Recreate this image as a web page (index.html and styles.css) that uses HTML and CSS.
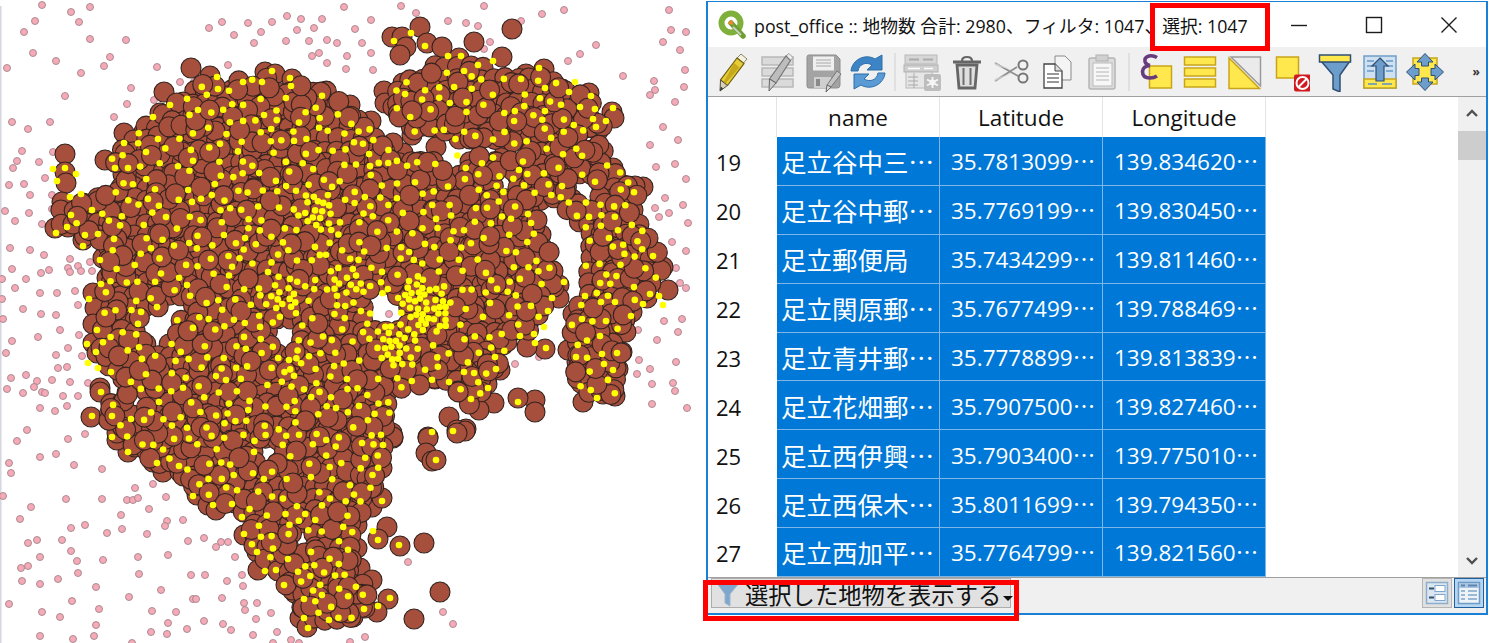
FILE: index.html
```html
<!DOCTYPE html>
<html lang="ja">
<head>
<meta charset="utf-8">
<title>post_office</title>
<link rel="stylesheet" href="styles.css">
</head>
<body>
<div class="page">
  <section class="map"><svg id="map" class="map-canvas" width="706" height="643" viewBox="0 0 706 643"></svg></section>
  <section class="window">
    <header class="titlebar">
      <svg class="logo" width="30" height="30" viewBox="0 0 30 30"><circle cx="14" cy="13" r="9.5" fill="#fff" stroke="#7fb03c" stroke-width="6"/><path d="M14 13 L26 26" stroke="#6f9f32" stroke-width="5.5" stroke-linecap="round"/><path d="M16 17 L24 25" stroke="#c9cfc0" stroke-width="2"/><path d="M10.5 13.5 L15 9.5 L16.5 15 Z" fill="#ef8a2e"/></svg>
      <div class="title">post_office :: 地物数 合計: 2980、フィルタ: 1047、選択: 1047</div>
      <div class="wbtn"><svg width="18" height="18" viewBox="0 0 18 18"><path d="M1 9.5H17" class="wline"/></svg></div>
      <div class="wbtn"><svg width="18" height="18" viewBox="0 0 18 18"><rect x="1.5" y="1.5" width="15" height="15" class="wline"/></svg></div>
      <div class="wbtn"><svg width="18" height="18" viewBox="0 0 18 18"><path d="M1.5 1.5L16.5 16.5M16.5 1.5L1.5 16.5" class="wline"/></svg></div>
    </header>
    <nav class="toolbar">
      <div class="tool"><svg width="40" height="40" viewBox="0 0 40 40"><path d="M24 6L28 2L34 7L30.500 11Z" fill="#f5f1df" stroke="#8b8468"/><path d="M24 6L31 11.500L14.500 33.500L7.500 28Z" fill="#e6cd35" stroke="#6d5e12" stroke-width="1.200"/><path d="M21 11L26.500 15.500L12 32L10.500 30.500Z" fill="#c7a91c"/><path d="M7.500 28L14.500 33.500L7 39Z" fill="#d9d0b8" stroke="#55503f"/><path d="M7.800 34.500L10 36.500L7 39Z" fill="#333"/></svg></div>
      <div class="tool"><svg width="40" height="40" viewBox="0 0 40 40"><g class="graybar"><rect x="4" y="5" width="31" height="8"/><rect x="4" y="16" width="31" height="8"/><rect x="4" y="27" width="31" height="8"/></g><path d="M28 4L31 1.500L35 5.500L32 9Z" fill="#eee" stroke="#999"/><path d="M28 4L32.500 8.500L18 31L11.500 27Z" fill="#bdbdbd" stroke="#777" stroke-width="1.200"/><path d="M11.500 27L18 31L11 39Z" fill="#ccc" stroke="#666"/></svg></div>
      <div class="tool"><svg width="40" height="40" viewBox="0 0 40 40"><path d="M4 5Q4 3 6 3H33L37 7V33Q37 36 34 36H6Q4 36 4 34Z" fill="#a3a3a3" stroke="#8d8d8d"/><rect x="10" y="4.500" width="21" height="14" fill="#efefef"/><path d="M13 8H28M13 11H28M13 14H28" stroke="#a8a8a8"/><rect x="11" y="25" width="17" height="11" fill="#cfcfcf"/><rect x="13" y="27" width="4" height="7" fill="#8a8a8a"/><path d="M34 19L38 22L28 35L24 33Z" fill="#c4c4c4" stroke="#777"/><path d="M24 33L28 35L23 40Z" fill="#ddd" stroke="#666"/></svg></div>
      <div class="tool"><svg width="40" height="40" viewBox="0 0 40 40"><path d="M3 19C4 8 17 1 27 7L34 3V18H19L24 13C18 9.500 11 12 10 19Z" fill="#3d84c6" stroke="#2f6ea8"/><path d="M37 21C36 32 23 39 13 33L6 37V22H21L16 27C22 30.500 29 28 30 21Z" fill="#5a9bd5" stroke="#2f6ea8"/></svg></div>
      <i class="sep sep-a"></i>
      <div class="tool"><svg width="40" height="40" viewBox="0 0 40 40"><rect x="3" y="3" width="32" height="9" fill="#d6d6d6" stroke="#b8b8b8"/><path d="M7 7.500H17M21 7.500H31" stroke="#aaa" stroke-width="2"/><rect x="2" y="13" width="34" height="7" fill="#cfcfcf" stroke="#b0b0b0"/><path d="M6 16.500H18M22 16.500H31" stroke="#fff" stroke-width="1.500"/><rect x="4" y="20" width="26" height="16" fill="#e6e6e6" stroke="#b8b8b8"/><path d="M6 25H16M6 29H16M6 33H16M12 21V36" stroke="#aaa"/><rect x="22" y="22" width="17" height="17" rx="2" fill="#bdbdbd"/><path d="M30.500 25V36M25 27.500L36 33.500M36 27.500L25 33.500" stroke="#f5f5f5" stroke-width="1.800"/><circle cx="30.500" cy="30.500" r="3" fill="#f5f5f5"/></svg></div>
      <div class="tool"><svg width="40" height="40" viewBox="0 0 40 40"><path d="M6 10H34" stroke="#666" stroke-width="3"/><path d="M15 9Q15 5 20 5Q25 5 25 9" fill="none" stroke="#666" stroke-width="2.200"/><path d="M10 13H30L28 36H12Z" fill="#dedede" stroke="#666" stroke-width="2.800"/><path d="M16.500 16V33M23.500 16V33" stroke="#6e6e6e" stroke-width="2"/></svg></div>
      <div class="tool"><svg width="40" height="40" viewBox="0 0 40 40"><path d="M3 11L26 24M3 29L25 15" stroke="#8d8d8d" stroke-width="1.800" fill="none"/><path d="M3 11L22 19L3 13Z" fill="#ccc"/><path d="M3 29L22 20L3 27Z" fill="#ccc"/><circle cx="31" cy="13" r="4.500" fill="#f2f2f2" stroke="#777" stroke-width="2"/><circle cx="31" cy="26" r="4.500" fill="#f2f2f2" stroke="#777" stroke-width="2"/></svg></div>
      <div class="tool"><svg width="40" height="40" viewBox="0 0 40 40"><path d="M18 4H28L34 10V28H18Z" fill="#f4f4f4" stroke="#8a8a8a"/><path d="M7 12H18L25 19V36H7Z" fill="#fff" stroke="#444" stroke-width="1.300"/><path d="M18 12V19H25" fill="#ddd" stroke="#444"/><path d="M10 22H22M10 26H22M10 30H22" stroke="#333"/></svg></div>
      <div class="tool"><svg width="40" height="40" viewBox="0 0 40 40"><rect x="7" y="6" width="26" height="31" rx="2" fill="#dcdcdc" stroke="#b5b5b5" stroke-width="1.500"/><rect x="14" y="3" width="12" height="6" fill="#d0d0d0" stroke="#b0b0b0"/><rect x="11" y="11" width="19" height="23" fill="#f7f7f7" stroke="#bbb"/><path d="M14 16H27M14 20H27M14 24H27M14 28H27" stroke="#b5b5b5"/></svg></div>
      <i class="sep sep-b"></i>
      <div class="tool"><svg width="40" height="40" viewBox="0 0 40 40"><rect x="14.500" y="14" width="22" height="22" class="ybox"/><path d="M22 5.500Q18 3 14 4Q9 5.500 10 9.500Q11 13 15 13.500Q8 14 7.500 19.500Q7.500 26 15 26Q19 26 22 24" fill="none" stroke="#673c7d" stroke-width="3.600"/></svg></div>
      <div class="tool"><svg width="40" height="40" viewBox="0 0 40 40"><rect x="4.500" y="5" width="31" height="8" class="ybox"/><rect x="4.500" y="16" width="31" height="8" class="ybox"/><rect x="4.500" y="27" width="31" height="8" class="ybox"/></svg></div>
      <div class="tool"><svg width="40" height="40" viewBox="0 0 40 40"><path d="M6 5H35.500V34Z" fill="#ebebeb" stroke="#9a9a9a" stroke-width="1.500"/><path d="M4 6L34.500 36.500H4Z" fill="#ffe84d" stroke="#c9a41a" stroke-width="1.500"/></svg></div>
      <div class="tool"><svg width="40" height="40" viewBox="0 0 40 40"><rect x="6.500" y="5" width="22" height="21" class="ybox"/><rect x="24" y="22.500" width="17" height="17" rx="2" fill="#d11a1f"/><circle cx="32.500" cy="31" r="6" fill="#d11a1f" stroke="#fff" stroke-width="2"/><path d="M28.500 35L36.500 27" stroke="#fff" stroke-width="2"/></svg></div>
      <div class="tool"><svg width="40" height="40" viewBox="0 0 40 40"><path d="M6 9L18 23V37L25 40V23L35 9Z" fill="#6d9dcb" stroke="#2f4f75" stroke-width="1.500"/><rect x="4.500" y="3" width="31" height="7" fill="#ffe84d" stroke="#2f4f75" stroke-width="1.500"/></svg></div>
      <div class="tool"><svg width="40" height="40" viewBox="0 0 40 40"><rect x="4" y="4" width="32" height="32" fill="#cfe0f0" stroke="#6f9cc7" stroke-width="1.500"/><path d="M7 9H14M26 9H33M7 14H14M26 14H33M7 19H14M26 19H33" stroke="#7eaad4" stroke-width="2"/><rect x="4" y="27" width="32" height="9" fill="#ffe84d" stroke="#c9a41a" stroke-width="1.500"/><path d="M8 32H17M22 32H32" stroke="#5c8fc2" stroke-width="1.500"/><path d="M20 6L28 14H24V29H16V14H12Z" fill="#6d9dcb" stroke="#2f4f75" stroke-width="1.200"/></svg></div>
      <div class="tool"><svg width="40" height="40" viewBox="0 0 40 40"><rect x="8" y="6" width="24" height="26" fill="#ffe84d" stroke="#c9a41a" stroke-width="1.500"/><g fill="#6d9dcb" stroke="#2f4f75"><path d="M20 1.500L28 10H23.500V14H16.500V10H12Z"/><path d="M20 38.500L28 30H23.500V26H16.500V30H12Z"/><path d="M1.500 20L10 12V16.500H14V23.500H10V28Z"/><path d="M38.500 20L30 12V16.500H26V23.500H30V28Z"/></g></svg></div>
      <div class="more">»</div>
    </nav>
    <div class="table-area">
      <div class="grid">
        <div class="head corner"></div><div class="head">name</div><div class="head">Latitude</div><div class="head">Longitude</div>
        <div class="rownum">19</div><div class="cell name">足立谷中三⋯</div><div class="cell">35.7813099⋯</div><div class="cell">139.834620⋯</div>
        <div class="rownum">20</div><div class="cell name">足立谷中郵⋯</div><div class="cell">35.7769199⋯</div><div class="cell">139.830450⋯</div>
        <div class="rownum">21</div><div class="cell name">足立郵便局</div><div class="cell">35.7434299⋯</div><div class="cell">139.811460⋯</div>
        <div class="rownum">22</div><div class="cell name">足立関原郵⋯</div><div class="cell">35.7677499⋯</div><div class="cell">139.788469⋯</div>
        <div class="rownum">23</div><div class="cell name">足立青井郵⋯</div><div class="cell">35.7778899⋯</div><div class="cell">139.813839⋯</div>
        <div class="rownum">24</div><div class="cell name">足立花畑郵⋯</div><div class="cell">35.7907500⋯</div><div class="cell">139.827460⋯</div>
        <div class="rownum">25</div><div class="cell name">足立西伊興⋯</div><div class="cell">35.7903400⋯</div><div class="cell">139.775010⋯</div>
        <div class="rownum">26</div><div class="cell name">足立西保木⋯</div><div class="cell">35.8011699⋯</div><div class="cell">139.794350⋯</div>
        <div class="rownum">27</div><div class="cell name">足立西加平⋯</div><div class="cell">35.7764799⋯</div><div class="cell">139.821560⋯</div>
      </div>
      <div class="spacer"></div>
      <aside class="scrollbar">
        <svg class="chev" width="16" height="12" viewBox="0 0 16 12"><path d="M3 9L8 4L13 9" fill="none" stroke="#505050" stroke-width="2.400"/></svg>
        <div class="thumb"></div>
        <div class="track"></div>
        <svg class="chev" width="16" height="12" viewBox="0 0 16 12"><path d="M3 3L8 8L13 3" fill="none" stroke="#505050" stroke-width="2.400"/></svg>
      </aside>
    </div>
    <footer class="statusbar">
      <div class="filterbtn">
        <svg class="funnel" width="26" height="26" viewBox="0 0 26 26"><path d="M1 1H25L15 13V25L10 22V13Z" fill="#7fa6cc" stroke="#9db6cf"/></svg>
        <span class="filterlabel">選択した地物を表示する</span>
        <i class="caret"></i>
      </div>
      <div class="viewbtns">
        <div class="viewbtn"><svg width="24" height="24" viewBox="0 0 24 24"><rect x="1.500" y="1.500" width="21" height="21" fill="#dbe6f0" stroke="#8eaecb" stroke-width="1.500"/><rect x="10" y="4.500" width="10" height="6" fill="#fff" stroke="#7fa6cc"/><rect x="10" y="13.500" width="10" height="6" fill="#fff" stroke="#7fa6cc"/><path d="M4 7.500H9M4 16.500H9" stroke="#34506e" stroke-width="2"/></svg></div>
        <div class="viewbtn active"><svg width="24" height="24" viewBox="0 0 24 24"><rect x="1.500" y="1.500" width="21" height="21" fill="#eef3f8" stroke="#6f9cc7" stroke-width="1.500"/><rect x="2" y="2" width="20" height="5" fill="#a8c4e0"/><path d="M4 4.500H8M11 4.500H20" stroke="#5c86b0" stroke-width="2"/><path d="M4 10H8M11 10H20M4 14H8M11 14H20M4 18H8M11 18H20" stroke="#7fa6cc" stroke-width="1.500"/></svg></div>
      </div>
    </footer>
    <div class="mark mark-title"></div>
    <div class="mark mark-filter"></div>
  </section>
</div>
<script src="app.js"></script>
</body>
</html>
```
FILE: styles.css
```css
* { box-sizing: border-box; }
html, body { margin: 0; height: 100%; background: #fff; overflow: hidden; }
body { font-family: "Open Sans", "Noto Sans CJK JP", sans-serif; color: #000; }
.page { display: flex; width: 1489px; height: 643px; }

.map { width: 706px; height: 643px; flex: none; }
.map-canvas { display: block; filter: blur(0.35px); }
.pink { fill: #f6a9b6; stroke: #a2858b; stroke-width: 0.9; }
.brown { fill: #a64f3c; stroke: #33231f; stroke-width: 1.1; }
.yellow { fill: #ffff00; }
.edge { fill: #d6d6de; }

.window {
  position: relative;
  width: 782px; height: 614px; margin-top: 1px; flex: none;
  border: 1px solid #1a80d6;
  border-width: 1px 2px 2px 2px;
  display: flex; flex-direction: column;
  background: #f0f0f0;
}
.titlebar { height: 45px; background: #fff; display: flex; align-items: center; padding-left: 9px; flex: none; }
.logo { flex: none; margin-right: 8px; }
.title { flex: 1; font-size: 17.800px; white-space: nowrap; font-family: "Open Sans", "Noto Sans CJK JP", sans-serif; color: #111; margin-left: -1px; }
.wbtn { width: 75px; height: 45px; display: flex; align-items: center; justify-content: center; flex: none; }
.wline { fill: none; stroke: #1c1c1c; stroke-width: 1.400; }

.toolbar { height: 50px; flex: none; display: flex; align-items: center; padding-left: 2px; background: #f0f0f0; border-bottom: 1px solid #a0a0a0; }
.tool { width: 45px; height: 49px; display: flex; align-items: center; justify-content: center; flex: none; }
.sep { display: block; height: 38px; flex: none; background: linear-gradient(#e0e0e0, #e0e0e0) center / 2px 100% no-repeat; }
.sep-a { width: 9.500px; }
.sep-b { width: 8px; }
.graybar rect { fill: #dadada; stroke: #b8b8b8; stroke-width: 1.500; }
.ybox { fill: #ffe84d; stroke: #c9a41a; stroke-width: 1.500; }
.more { margin-left: 25px; font-size: 12px; font-weight: 700; color: #333; line-height: 1; }

.table-area { height: 481px; flex: none; display: flex; background: #fff; border-bottom: 1px solid #a0a0a0; }
.grid { width: 558px; flex: none; display: grid; grid-template-columns: 69px 163px 163px 163px; grid-template-rows: 40px repeat(9, 48.875px); align-content: start; }
.head { background: #fff; border-right: 1px solid #e4e4e4; display: flex; align-items: center; justify-content: center; color: #111; font-size: 22.500px; padding-top: 1px; }
.corner { border-right: 1px solid #e4e4e4; }
.rownum { background: #fff; display: flex; align-items: center; padding: 2px 0 0 8px; font-size: 22px; color: #111; }
.cell { background: #0078d7; color: #fff; display: flex; align-items: center; padding: 0 0 0 11px; white-space: nowrap; overflow: hidden; border-right: 1px solid #7db7e8; border-bottom: 1px solid #7db7e8; font-size: 22.500px; }
.name { padding-left: 4px; font-size: 25.500px; }
.spacer { flex: 1; }
.scrollbar { width: 28px; flex: none; background: #f0f0f0; display: flex; flex-direction: column; align-items: center; }
.chev { flex: none; margin: 10px 0; }
.thumb { width: 100%; height: 29px; background: #cdcdcd; margin-top: 2px; flex: none; }
.track { flex: 1; }

.statusbar { flex: 1; display: flex; justify-content: space-between; align-items: flex-start; background: #f0f0f0; padding: 0 2px 0 3px; }
.filterbtn { width: 300px; height: 30px; display: flex; align-items: center; padding-left: 3px; gap: 4px; background: #e1e1e1; border: 1px solid #adadad; }
.funnel { flex: none; margin-top: 2px; }
.filterlabel { font-family: "Noto Sans CJK JP", sans-serif; font-size: 23.300px; line-height: 30px; white-space: nowrap; color: #111; flex: none; padding-top: 1px; }
.caret { width: 0; height: 0; border: 5px solid transparent; border-top-color: #111; border-bottom: 0; margin: 10px 0 0 -2px; flex: none; }
.viewbtns { display: flex; gap: 2px; }
.viewbtn { width: 30px; height: 30px; display: flex; align-items: center; justify-content: center; background: #e1e1e1; border: 1px solid #b5b5b5; }
.active { background: #b5d5f2; border-color: #1f5f9e; }

.mark { position: absolute; border: 5.500px solid #ff0000; pointer-events: none; }
.mark-title { left: 442px; top: 1px; width: 120px; height: 48px; }
.mark-filter { left: -5px; top: 578px; width: 316px; height: 41px; }
```
FILE: app.js
```js
(function () {
  var seed = 20240611;
  function rnd() {
    seed = (seed + 0x6D2B79F5) | 0;
    var t = Math.imul(seed ^ (seed >>> 15), 1 | seed);
    t = (t + Math.imul(t ^ (t >>> 7), 61 | t)) ^ t;
    return ((t ^ (t >>> 14)) >>> 0) / 4294967296;
  }
  function gauss() { return (rnd() + rnd() + rnd() + rnd() - 2) * 1.22; }

  var pink = [42,5,90,7,71,12,35,21,79,22,24,32,90,39,126,40,33,53,56,61,110,57,7,68,81,73,104,66,157,67,131,88,65,96,127,104,114,117,12,122,50,122,28,129,22,151,17,161,13,168,39,162,45,178,9,185,24,184,30,195,5,211,29,213,52,195,52,209,53,152,180,82,194,82,154,100,228,65,260,118,209,28,222,22,248,23,272,22,287,16,301,19,322,19,344,7,234,35,261,32,254,43,286,41,297,30,314,28,309,41,327,40,337,43,312,56,319,53,327,63,347,56,346,69,
    15,221,42,224,10,248,30,250,44,255,70,259,78,266,90,262,12,269,41,273,49,270,68,268,70,272,81,271,92,271,2,279,26,279,15,288,40,293,57,293,75,291,2,299,78,305,23,309,41,314,56,315,3,319,60,330,38,337,79,335,12,341,68,348,6,353,56,355,82,356,58,368,67,367,26,375,11,378,37,381,52,380,70,382,88,383,7,389,34,387,23,393,42,392,45,393,63,396,78,396,67,406,40,408,55,411,27,430,85,434,68,439,17,441,147,440,
    40,457,56,454,9,463,74,465,11,473,102,469,153,484,135,488,3,496,66,499,102,499,127,500,133,500,138,498,166,497,31,507,149,509,121,515,20,519,167,521,183,520,165,526,85,525,71,528,122,529,107,533,147,534,37,540,28,543,62,540,188,541,204,538,221,542,228,542,216,547,71,551,40,557,77,561,103,560,138,557,168,555,235,557,21,568,28,566,78,573,139,574,191,575,205,575,242,575,22,581,58,579,40,584,227,581,96,587,243,586,161,590,129,597,193,599,196,599,222,598,72,601,9,604,244,603,257,603,99,609,42,612,152,611,176,612,245,610,271,613,60,617,256,619,96,625,168,623,204,621,223,624,187,629,231,630,151,632,167,634,253,635,277,632,40,636,94,636,73,639,291,640,299,643,132,643,273,643,
    401,6,484,6,416,13,371,20,448,21,466,23,478,26,355,29,521,21,542,14,564,10,669,10,671,30,686,32,663,42,680,50,490,42,484,49,362,43,371,53,596,45,580,54,568,61,373,70,685,70,623,76,654,81,655,90,684,87,650,95,675,102,663,127,678,140,650,145,675,164,656,167,686,179,665,198,683,205,655,208,669,213,659,217,688,223,
    672,242,686,251,676,268,680,283,686,288,389,314,664,321,682,319,638,330,678,332,657,340,539,357,413,363,515,364,639,360,676,362,650,369,637,374,652,384,673,383,675,391,652,404,687,408,408,562,443,612,453,624,365,637,350,642,330,238];

  var edgeB = [191,68,210,76,164,92,265,72,275,74,292,79,160,113,144,132,124,133,105,160,65,154,65,172,66,183,62,202,83,203,
    512,29,420,27,392,37,402,37,406,47,400,55,427,43,442,47,474,42,502,57,436,67,459,58,544,69,526,74,562,89,589,93,612,112,614,118,598,131,585,128,384,91,385,103,393,107,403,83,412,135,436,147,403,153,393,143,371,121,358,120,350,105,505,152,613,168,643,187,635,186,623,185,633,210,620,222,598,177,572,199,533,197,525,177,518,177,
    663,267,668,290,647,298,632,312,573,314,587,315,577,334,622,352,618,369,598,366,577,362,568,350,581,383,601,380,615,396,603,394,583,402,535,400,518,398,535,412,545,349,559,285,559,298,554,287,500,370,487,384,475,388,494,403,479,410,473,352,463,372,435,379,503,345,527,347,449,417,466,429,457,430,428,437,391,434,377,414,393,438,
    428,438,426,453,432,461,436,460,465,431,457,433,392,433,393,437,383,447,370,487,357,485,382,468,372,507,382,498,357,525,387,527,378,539,400,546,424,543,357,548,360,568,372,580,360,588,388,599,440,592,414,619,377,612,365,608,353,617,
    128,452,135,447,117,440,153,462,163,472,180,472,197,495,208,505,216,510,235,503,242,498,244,535,257,552,258,570,277,558,295,593,300,618,307,627,326,610,347,613,
    55,228,68,227,83,240,92,232,103,258,110,245,93,293,112,267,107,278,95,308,93,324,112,327,93,343,97,353,118,352,100,388,100,392,91,417,112,410,132,420,117,433,127,393];

  var edgeY = [394,41,411,33,425,46,448,56,461,56,493,61,478,65,539,68,521,79,575,82,569,92,591,96,613,108,593,119,606,121,596,127,580,107,545,88,
    217,77,218,89,272,71,290,78,291,86,243,82,262,82,170,105,153,117,124,143,53,169,65,168,76,174,57,181,81,194,70,197,92,210,71,215,115,168,128,168,146,152,158,139,
    128,452,157,463,179,466,193,496,213,505,232,504,242,517,244,534,257,552,265,571,276,570,284,585,304,599,304,618,308,628,329,620,
    432,432,436,460,453,431,399,545,378,540,373,531,390,598,378,606,364,609,382,501,383,445,
    653,256,663,305,659,296,643,304,631,316,634,287,650,294,615,302,601,302,582,319,576,357,600,336,606,321,602,354,604,364,617,353,613,370,597,398,518,402,546,348,535,343,488,388,496,369,471,399,464,372,495,357,585,296,564,282,552,298,548,311,544,327,534,334,520,336,
    56,233,67,227,83,246,98,234,100,260,101,284,89,299,97,330,87,344,96,352,88,363,98,368,111,372,101,392,92,416,112,416,131,419,112,437];

  var polys = [
    [165,110,195,85,265,78,330,90,375,130,398,160,440,160,480,180,530,195,540,230,555,265,558,285,545,305,538,335,510,345,500,365,480,395,470,405,445,380,420,385,395,390,390,420,385,440,380,480,355,525,350,560,362,580,375,600,360,618,325,630,305,620,295,595,265,570,245,535,250,520,220,505,195,490,170,470,135,452,110,425,100,390,100,320,103,270,110,245,83,235,60,225,60,205,95,200,115,185,110,160,125,135,150,125],
    [395,90,420,70,460,60,500,70,545,75,590,100,610,125,590,135,550,140,530,145,500,147,470,142,440,138,410,135,392,110],
    [505,155,530,150,560,145,600,140,615,165,640,190,630,215,615,225,590,240,575,225,560,205,530,200,515,185],
    [590,225,635,210,660,255,665,270,655,285,640,300,625,305,632,312,625,345,615,395,585,400,575,370,570,340,572,310,590,300,585,270],
    [455,155,497,155,502,188,470,192]
  ];
  var holes = [[157,328,16],[175,308,12],[285,337,14],[115,390,13],[383,310,20],[267,453,13],[302,542,11],[583,190,12],[420,150,12],[137,400,11]];

  function inPoly(p, x, y) {
    var c = false;
    for (var i = 0, j = p.length - 2; i < p.length; j = i, i += 2) {
      if ((p[i + 1] > y) !== (p[j + 1] > y) && x < (p[j] - p[i]) * (y - p[i + 1]) / (p[j + 1] - p[i + 1]) + p[i]) c = !c;
    }
    return c;
  }
  function inside(x, y) {
    var ok = false;
    for (var i = 0; i < polys.length; i++) if (inPoly(polys[i], x, y)) ok = true;
    if (!ok) return false;
    for (var h = 0; h < holes.length; h++) {
      var dx = x - holes[h][0], dy = y - holes[h][1], r = holes[h][2];
      if (dx * dx + dy * dy < r * r) return false;
    }
    return true;
  }
  function scatter(target, gap, out) {
    var tries = 0, g2 = gap * gap;
    while (target > 0 && tries < 200000) {
      tries++;
      var x = 50 + rnd() * 620, y = 55 + rnd() * 580;
      if (!inside(x, y)) continue;
      var clash = false;
      for (var i = 0; i < out.length; i += 2) {
        var dx = out[i] - x, dy = out[i + 1] - y;
        if (dx * dx + dy * dy < g2) { clash = true; break; }
      }
      if (clash) continue;
      out.push(x, y); target--;
    }
    return out;
  }
  function cluster(out, cx, cy, sd, n) {
    var placed = 0, tries = 0;
    while (placed < n && tries < n * 40) {
      tries++;
      var x = cx + gauss() * sd, y = cy + gauss() * sd, clash = false;
      for (var i = 0; i < out.length; i += 2) {
        var dx = out[i] - x, dy = out[i + 1] - y;
        if (dx * dx + dy * dy < 32) { clash = true; break; }
      }
      if (!clash) { out.push(x, y); placed++; }
    }
  }
  function underlay(step) {
    var out = [];
    for (var y = 55; y < 640; y += step) {
      for (var x = 50; x < 680; x += step) {
        if (inside(x, y)) out.push(x + (rnd() - 0.5) * 3, y + (rnd() - 0.5) * 3);
      }
    }
    return out;
  }

  var base = underlay(12);
  var browns = scatter(800, 7, []);
  var yellows = edgeY.slice();
  cluster(yellows, 425, 305, 13, 46);
  cluster(yellows, 397, 343, 14, 30);
  cluster(yellows, 315, 212, 14, 24);
  cluster(yellows, 283, 295, 12, 18);
  cluster(yellows, 293, 367, 12, 12);
  cluster(yellows, 345, 280, 30, 30);
  scatter(680, 9, yellows);

  function dots(list, cls, r) {
    var s = '';
    for (var i = 0; i < list.length; i += 2) {
      s += '<circle class="' + cls + '" cx="' + list[i].toFixed(1) + '" cy="' + list[i + 1].toFixed(1) + '" r="' + r + '"/>';
    }
    return s;
  }
  document.getElementById('map').innerHTML =
    '<rect class="edge" x="0" y="6" width="1.5" height="637"/>' +
    dots(pink, 'pink', 3.5) + dots(edgeB, 'brown', 10) + dots(base, 'brown', 10) + dots(browns, 'brown', 10) + dots(yellows, 'yellow', 3.3);
})();
```
